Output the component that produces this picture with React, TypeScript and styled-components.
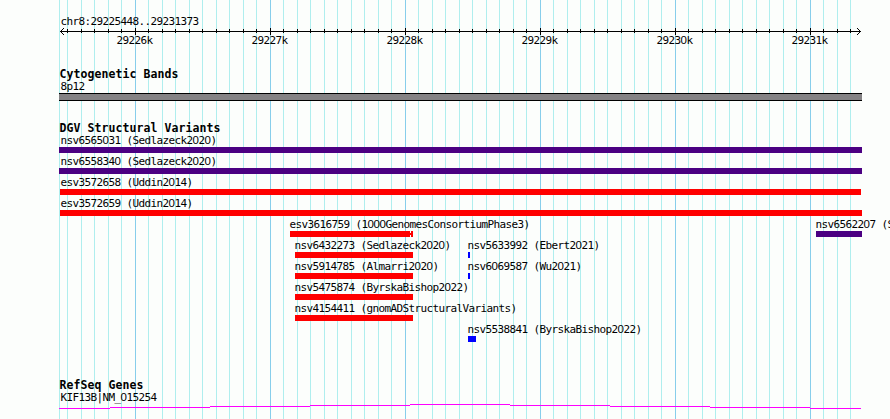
import React from "react";
import styled, { createGlobalStyle } from "styled-components";

const LEFT = 59;
const PURPLE = "#4b0082";
const RED = "#ff0000";
const BLUE = "#0000ff";

const GlobalStyle = createGlobalStyle`
  html, body { margin: 0; padding: 0; background: #fcfefc; overflow: hidden; }
`;

const Browser = styled.main`
  position: relative;
  width: 890px;
  height: 419px;
  overflow: hidden;
  background: #fcfefc;
  color: #000;
`;

const GridLines = styled.svg`
  position: absolute;
  inset: 0;
  display: block;
`;

const Tracks = styled.div`
  position: relative;
  display: flex;
  flex-direction: column;
  padding-left: ${LEFT}px;
  height: 419px;
`;

const Region = styled.header`
  display: flex;
  flex-direction: column;
  height: 66px;
  padding-top: 13px;
  box-sizing: border-box;
`;

const Axis = styled.svg`
  display: block;
  flex: none;
  width: 803px;
  height: 7px;
`;

const TickLabels = styled.div`
  display: flex;
  padding-left: 57.5px;
  gap: 99px;
  margin-top: -3px;
`;

const Track = styled.section<{ $height: number }>`
  display: flex;
  flex-direction: column;
  flex: none;
  height: ${(p) => p.$height}px;
`;

const Title = styled.h2`
  margin: 0;
  height: 12px;
  padding-left: 0.4px;
  font: bold 11.5px/16px "DejaVu Sans Mono", monospace;
  letter-spacing: 0.077px;
  white-space: pre;
`;

const Label = styled.div<{ $indent?: number }>`
  width: 0;
  height: 15px;
  padding-left: ${(p) => p.$indent ?? 1.4}px;
  font: 11px/17px "DejaVu Sans Mono", monospace;
  letter-spacing: -0.623px;
  white-space: pre;
`;

const TickLabel = styled(Label)`
  width: 36px;
  padding-left: 0;
`;

const Zero = styled.span`
  font: 11.5px/1 "Liberation Sans", sans-serif;
  letter-spacing: -0.396px;
`;

const Row = styled.div`
  display: flex;
  flex: none;
  height: 21px;
`;

const FeatureBox = styled.div<{ $gap: number; $width: number }>`
  flex: none;
  width: ${(p) => p.$width}px;
  margin-left: ${(p) => p.$gap}px;
`;

const Segments = styled.div`
  display: flex;
  align-items: center;
  height: 6px;
`;

const Bar = styled.div<{ $color: string; $inset?: number }>`
  flex: 1;
  height: 6px;
  margin-left: ${(p) => p.$inset ?? 0}px;
  background: ${(p) => p.$color};
`;

const Intron = styled.div`
  width: 1px;
  height: 2px;
  background: ${RED};
`;

const Exon = styled.div`
  width: 2px;
  height: 6px;
  background: ${RED};
`;

const Chromosome = styled.div`
  box-sizing: border-box;
  width: 803px;
  height: 8px;
  border: solid #000;
  border-width: 1px 0;
  background: #848284;
`;

const GeneLine = styled.svg`
  display: block;
  width: 803px;
  height: 5px;
`;

function Mono({ text }: { text: string }) {
  return (
    <>
      {text.split(/(0+)/).map((part, i) =>
        part.startsWith("0") ? <Zero key={i}>{part}</Zero> : part,
      )}
    </>
  );
}

type Feature = {
  name: string;
  start: number;
  end: number;
  color: string;
  inset?: number;
  split?: boolean;
};

const rows: Feature[][] = [
  [{ name: "nsv6565031 (Sedlazeck2020)", start: 59, end: 862, color: PURPLE }],
  [{ name: "nsv6558340 (Sedlazeck2020)", start: 59, end: 862, color: PURPLE }],
  [{ name: "esv3572658 (Uddin2014)", start: 59, end: 861, color: RED, inset: 1 }],
  [{ name: "esv3572659 (Uddin2014)", start: 59, end: 862, color: RED, inset: 1 }],
  [
    { name: "esv3616759 (1000GenomesConsortiumPhase3)", start: 289, end: 413, color: RED, inset: 1, split: true },
    { name: "nsv6562207 (Sedlazeck2020)", start: 815, end: 862, color: PURPLE, inset: 1 },
  ],
  [
    { name: "nsv6432273 (Sedlazeck2020)", start: 294, end: 413, color: RED, inset: 1 },
    { name: "nsv5633992 (Ebert2021)", start: 467, end: 470, color: BLUE, inset: 1 },
  ],
  [
    { name: "nsv5914785 (Almarri2020)", start: 294, end: 413, color: RED, inset: 1 },
    { name: "nsv6069587 (Wu2021)", start: 467, end: 470, color: BLUE, inset: 1 },
  ],
  [{ name: "nsv5475874 (ByrskaBishop2022)", start: 294, end: 413, color: RED, inset: 1 }],
  [{ name: "nsv4154411 (gnomADStructuralVariants)", start: 294, end: 413, color: RED, inset: 1 }],
  [{ name: "nsv5538841 (ByrskaBishop2022)", start: 467, end: 476, color: BLUE, inset: 1 }],
];

const ticks = Array.from({ length: 59 }, (_, i) => {
  const k = i - 5;
  return { x: Math.floor(135 + k * 13.5) + (k === -4 ? 0 : 0), major: k % 10 === 0 };
}).filter((t) => t.x < 855);

const geneSteps: [number, number, number][] = [
  [59, 110, 4], [110, 210, 3], [210, 310, 2], [310, 410, 1], [410, 510, 0],
  [510, 610, 1], [610, 710, 2], [710, 810, 3], [810, 861, 4],
];

export default function App() {
  return (
    <>
      <GlobalStyle />
      <Browser>
        <GridLines width="890" height="419" shapeRendering="crispEdges">
          <rect x={LEFT} width="1" height="419" fill="#afeeee" />
          {ticks.map((t) => (
            <rect key={t.x} x={t.x} width="1" height="419" fill={t.major ? "#87ceeb" : "#afeeee"} />
          ))}
        </GridLines>
        <Tracks>
          <Region>
            <Label><Mono text="chr8:29225448..29231373" /></Label>
            <Axis shapeRendering="crispEdges">
              <rect x="1" y="3" width="801" height="1" />
              {ticks.map((t) => (
                <rect key={t.x} x={t.x - LEFT} y={t.major ? 0 : 1} width="1" height={t.major ? 7 : 4} />
              ))}
              {[1, 2, 3].map((d) => (
                <g key={d}>
                  <rect x={1 + d} y={3 - d} width="1" height="1" />
                  <rect x={1 + d} y={3 + d} width="1" height="1" />
                  <rect x={801 - d} y={3 - d} width="1" height="1" />
                  <rect x={801 - d} y={3 + d} width="1" height="1" />
                </g>
              ))}
            </Axis>
            <TickLabels>
              {[26, 27, 28, 29, 30, 31].map((n) => (
                <TickLabel key={n}><Mono text={`292${n}k`} /></TickLabel>
              ))}
            </TickLabels>
          </Region>
          <Track $height={54}>
            <Title>Cytogenetic Bands</Title>
            <Label><Mono text="8p12" /></Label>
            <Chromosome />
          </Track>
          <Track $height={257}>
            <Title>DGV Structural Variants</Title>
            {rows.map((row, r) => (
              <Row key={r}>
                {row.map((f, i) => (
                  <FeatureBox
                    key={f.name}
                    $gap={f.start - (i ? row[i - 1].end : LEFT)}
                    $width={f.end - f.start}
                  >
                    <Label $indent={f.start === LEFT ? 1.4 : 0.6}><Mono text={f.name} /></Label>
                    <Segments>
                      <Bar $color={f.color} $inset={f.inset} />
                      {f.split && <><Intron /><Exon /></>}
                    </Segments>
                  </FeatureBox>
                ))}
              </Row>
            ))}
          </Track>
          <Track $height={42}>
            <Title>RefSeq Genes</Title>
            <Label><Mono text="KIF13B|NM_015254" /></Label>
            <GeneLine shapeRendering="crispEdges">
              {geneSteps.map(([from, to, y]) => (
                <rect key={from} x={from - LEFT} y={y} width={to - from} height="1" fill="#ff00ff" />
              ))}
            </GeneLine>
          </Track>
        </Tracks>
      </Browser>
    </>
  );
}
